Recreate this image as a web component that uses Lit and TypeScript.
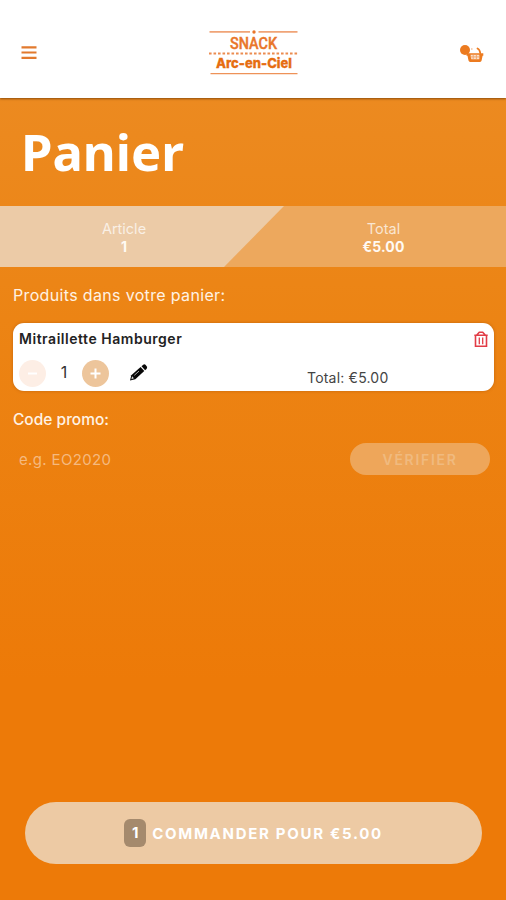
import { LitElement, html, css } from "lit";
import { customElement, property } from "lit/decorators.js";

@customElement("app-header")
class AppHeader extends LitElement {
  static styles = css`
    :host { display: block; position: relative; z-index: 1; }
    header {
      height: 98px; box-sizing: border-box; background: #fff;
      display: grid; grid-template-columns: 60px 1fr 60px; align-items: start;
      box-shadow: 0 1px 2px rgba(90, 45, 0, 0.65);
    }
    .menu { margin: 45px 0 0 21px; width: 16px; height: 15px; }
    .logo { justify-self: center; margin: 28px 0 0 2px; width: 92px; height: 48px; }
    .cart { margin: 43px 0 0 13px; width: 26px; height: 21px; }
    svg { display: block; }
    text { fill: #e9762b; }
    .snack { font: 500 17px "Roboto", sans-serif; stroke: #e9762b; stroke-width: 0.4; }
    .name { font: 800 13.5px "Inter", sans-serif; fill: #e66d10; stroke: #e66d10; stroke-width: 0.3; }
  `;
  render() {
    return html`<header>
      <svg class="menu" viewBox="0 0 16 15" stroke="#e27a2e" stroke-width="2.2">
        <path d="M.5 2.300h15M.5 7.500h15M.5 12.800h15" />
      </svg>
      <svg class="logo" viewBox="0 0 92 48">
        <path d="M1.500 3.800H42M50.500 3.800H89.500" stroke="#f0a477" stroke-width="1.700" />
        <circle cx="46" cy="4" r="1.700" fill="#e9762b" />
        <text class="snack" x="22" y="21" textLength="47" lengthAdjust="spacingAndGlyphs">SNACK</text>
        <path d="M1 25.500H91" stroke="#ec8c50" stroke-width="1.800" stroke-dasharray="2.600 1.900" />
        <text class="name" x="8" y="40" textLength="76" lengthAdjust="spacingAndGlyphs">Arc-en-Ciel</text>
        <path d="M2.500 45.600H89.500" stroke="#ee9258" stroke-width="1.300" />
      </svg>
      <svg class="cart" viewBox="0 0 26 21">
        <circle cx="6" cy="7" r="5" fill="#ec7b20" />
        <path d="M18.500 5.500Q20.800 6.500 21.200 10" fill="none" stroke="#ec7b20" stroke-width="1.800" stroke-linecap="round" />
        <path d="M12.800 5v2" stroke="#f7cdb0" stroke-width="1.400" />
        <path d="M8.500 10.200H24.300V12.700H23.600L22.600 17.600Q22.300 19 21 19H11.200Q9.800 19 9.500 17.600L8.500 12.700H7.500V11.500Z" fill="#ec7b20" />
        <path d="M11.500 11.800H20.300V16.200H12.300Z" fill="#fbe3d0" />
        <path d="M14.200 11.800v4.400M17.400 11.800v4.400M11.500 13.900h9" stroke="#f0a468" stroke-width=".9" />
      </svg>
    </header>`;
  }
}

@customElement("cart-summary")
class CartSummary extends LitElement {
  @property({ type: Number }) count = 0;
  @property() total = "";
  static styles = css`
    :host { display: block; }
    .bar {
      height: 61px; display: grid; grid-template-columns: 248px 1fr; line-height: 18px;
      font-size: 14.5px; text-align: center; color: rgba(255, 255, 255, 0.72);
      background: #eda85d; position: relative;
    }
    .slope { position: absolute; inset: 0; background: #eccba7; clip-path: polygon(0 0, 284px 0, 224px 100%, 0 100%); }
    .cell { position: relative; padding-top: 14px; }
    .cell + .cell { padding-left: 13px; }
    b { display: block; font-weight: 700; font-size: 14px; line-height: 17px; color: #fffaf4; letter-spacing: 0.1px; }
  `;
  render() {
    return html`<div class="bar">
      <div class="slope"></div>
      <div class="cell">Article<b>${this.count}</b></div>
      <div class="cell">Total<b>${this.total}</b></div>
    </div>`;
  }
}

@customElement("cart-item")
class CartItem extends LitElement {
  @property() name = "";
  @property({ type: Number }) quantity = 1;
  @property() total = "";
  static styles = css`
    :host { display: block; }
    .card {
      height: 68px; box-sizing: border-box; background: #fff; border-radius: 11px;
      padding: 7px 6px 0; color: #222; box-shadow: 0 0 3px rgba(150, 70, 0, 0.5);
    }
    .row { display: flex; align-items: flex-start; }
    .top { justify-content: space-between; height: 30px; }
    .name { font-weight: 600; font-size: 14px; line-height: 18px; letter-spacing: 0.53px; }
    .trash { width: 14px; height: 17px; margin-top: 1px; }
    .btn { width: 27px; height: 27px; border-radius: 50%; display: grid; place-items: center; background: #edc59b; }
    .btn.off { background: #fdeee5; }
    .qty { width: 36px; text-align: center; font-size: 16px; line-height: 24px; color: #333; }
    .pencil { width: 20px; height: 19px; margin: 3px 0 0 20px; }
    .sum { margin: 9px 0 0 158px; font-size: 14px; line-height: 18px; color: #444; letter-spacing: 0.2px; }
    svg { display: block; }
  `;
  render() {
    return html`<div class="card">
      <div class="row top">
        <div class="name">${this.name}</div>
        <svg class="trash" viewBox="0 0 14 17" fill="none" stroke="#e23c46" stroke-width="1.6">
          <path d="M.3 4.300H13.700M1.500 4.500V15.300H12.500V4.500M2.800 4 5.300 1.200H8.700L11.200 4" />
          <path d="M5.300 6.500V13.200M8.700 6.500V13.200" stroke-width="1.300" />
        </svg>
      </div>
      <div class="row">
        <div class="btn off"><svg width="11" height="11" stroke="#fff" stroke-width="2"><path d="M1 5.500H10" /></svg></div>
        <div class="qty">${this.quantity}</div>
        <div class="btn"><svg width="11" height="11" stroke="#fff" stroke-width="2"><path d="M0.500 5.500H10.500M5.500 0.500V10.500" /></svg></div>
        <svg class="pencil" viewBox="0 0 20 19">
          <path d="M1 17.500 2.300 12.200 11.600 4 15.300 8 6.300 16.200Z" fill="#080808" />
          <path d="M12.500 3.200 14.200 1.700Q15.500.8 16.700 2L17.800 3.500Q18.600 4.800 17.500 6L16.100 7.200Z" fill="#080808" />
          <path d="M5.300 12.300 10 8.100" stroke="#bbb" stroke-width=".9" />
          <path d="M3.100 13.200 4.900 15.300 2.400 16.200Z" fill="#ddd" />
        </svg>
        <div class="sum">Total: ${this.total}</div>
      </div>
    </div>`;
  }
}

@customElement("app-root")
class AppRoot extends LitElement {
  private count = 1;
  private total = "€5.00";
  static styles = css`
    :host {
      display: flex; flex-direction: column; height: 900px; color: #fff;
      font-family: "Inter", sans-serif;
      background: linear-gradient(#ec8a20 98px, #ec8414 320px, #ed7a08 680px);
    }
    h1 { margin: 0; height: 108px; box-sizing: border-box; padding: 20px 0 0 21px; font: 700 50.7px/68px "Noto Sans", sans-serif; }
    .label { margin: 0; padding-left: 13px; font-size: 16px; line-height: 20px; color: #fff2e4; }
    .products { margin-top: 18px; letter-spacing: 0.34px; }
    cart-item { margin: 18px 12px 0 13px; }
    .promo-label { margin-top: 19px; font-size: 15.5px; font-weight: 500; }
    .promo { display: flex; justify-content: space-between; margin: 13px 16px 0 19px; height: 32px; line-height: 33px; }
    .hint { font-size: 15px; color: #f5b97f; letter-spacing: 0.35px; }
    .verify { width: 140px; border-radius: 16px; background: #eea65a; color: #f0ba7f; text-align: center; font-size: 14px; font-weight: 600; letter-spacing: 1.7px; }
    .order {
      margin: auto 24px 36px 25px; height: 62px; border-radius: 31px; background: #edcaa4;
      display: flex; align-items: center; justify-content: center; gap: 6px;
      font-size: 15px; font-weight: 700; letter-spacing: 1.7px;
    }
    .badge { width: 22px; height: 28px; line-height: 28px; border-radius: 6px; background: #a58a6d; text-align: center; letter-spacing: 0; }
  `;
  render() {
    return html`
      <app-header></app-header>
      <h1>Panier</h1>
      <cart-summary .count=${this.count} .total=${this.total}></cart-summary>
      <p class="label products">Produits dans votre panier:</p>
      <cart-item .name=${"Mitraillette Hamburger"} .quantity=${this.count} .total=${this.total}></cart-item>
      <p class="label promo-label">Code promo:</p>
      <div class="promo"><span class="hint">e.g. EO2020</span><div class="verify">VÉRIFIER</div></div>
      <div class="order"><span class="badge">${this.count}</span><span>COMMANDER POUR ${this.total}</span></div>
    `;
  }
}
